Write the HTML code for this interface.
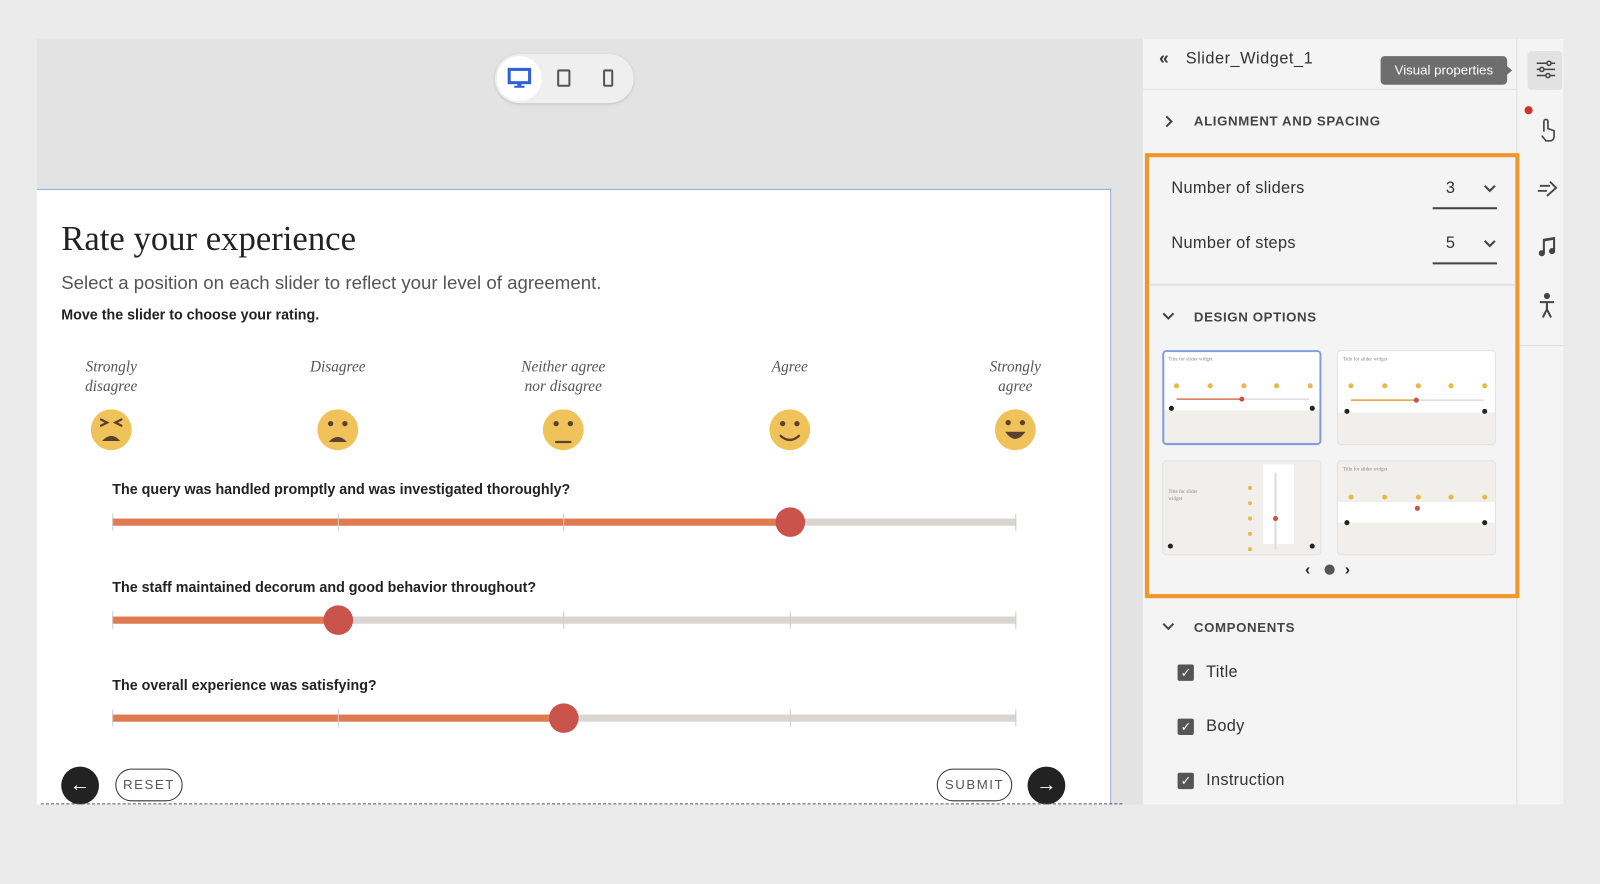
<!DOCTYPE html>
<html><head><meta charset="utf-8"><style>
*{margin:0;padding:0;box-sizing:border-box}
html,body{width:1600px;height:884px;overflow:hidden;background:#ebebeb}
#w{position:absolute;left:0;top:0;width:1568px;height:866px;transform:scale(1.02041,1.02079);transform-origin:0 0;font-family:"Liberation Sans",sans-serif}
.a{position:absolute}
.serif{font-family:"Liberation Serif",serif}
.lab{position:absolute;width:140px;text-align:center;font-family:"Liberation Serif",serif;font-style:italic;font-size:15px;color:#555;line-height:19px}
.q{position:absolute;left:110px;font-size:14px;font-weight:bold;color:#222}
.trk{position:absolute;left:110px;width:886px;height:7px;background:#d9d6d2}
.fill{position:absolute;left:0;top:0;height:7px;background:#e07a50}
.tk{position:absolute;top:-5px;width:1px;height:17px;background:#ccc}
.kn{position:absolute;top:-11px;width:29px;height:29px;border-radius:50%;background:#c9524a}
.pt{color:#333;font-size:16px;position:absolute;letter-spacing:.3px}
.hd{position:absolute;font-size:13px;font-weight:bold;letter-spacing:.6px;color:#444}
.cb{position:absolute;left:1154px;width:16px;height:16px;background:#555;border-radius:2px;color:#fff;font-size:12px;text-align:center;line-height:16px}
.th{position:absolute;width:156px;height:93px;background:#f0efeb;border-radius:4px;border:1px solid #e2e2e2;overflow:hidden}
</style></head><body><div id="w">
<div class="a" style="left:36px;top:38px;width:1084px;height:750px;background:#e3e3e3"></div>
<div class="a" style="left:485px;top:53px;width:136px;height:48px;border-radius:24px;background:#efefef;box-shadow:0 1px 3px rgba(0,0,0,.15)"></div>
<div class="a" style="left:487px;top:55px;width:44px;height:44px;border-radius:22px;background:#fff"></div>
<svg class="a" style="left:497px;top:66px" width="24" height="22"><rect x="2" y="2" width="20" height="13" fill="none" stroke="#2f62d6" stroke-width="3"/><rect x="10" y="15" width="4" height="4" fill="#2f62d6"/><rect x="7" y="18" width="10" height="2" fill="#2f62d6"/></svg>
<svg class="a" style="left:545px;top:67px" width="16" height="20"><rect x="2" y="2" width="11" height="15" rx="1" fill="none" stroke="#555" stroke-width="2"/></svg>
<svg class="a" style="left:590px;top:67px" width="14" height="20"><rect x="2" y="2" width="8" height="15" rx="1" fill="none" stroke="#555" stroke-width="2"/></svg>
<div class="a" style="left:36px;top:185px;width:1053px;height:603px;background:#fff;border-top:1px solid #8fa8d8;border-right:1px solid #8fa8d8"></div>
<div class="a serif" style="left:60px;top:216px;font-size:34px;color:#222">Rate your experience</div>
<div class="a" style="left:60px;top:266px;font-size:18.3px;color:#555">Select a position on each slider to reflect your level of agreement.</div>
<div class="a" style="left:60px;top:300px;font-size:14px;font-weight:bold;color:#222">Move the slider to choose your rating.</div>
<div class="lab" style="left:39px;top:351px">Strongly<br>disagree</div>
<div class="lab" style="left:261px;top:351px">Disagree</div>
<div class="lab" style="left:482px;top:351px">Neither agree<br>nor disagree</div>
<div class="lab" style="left:704px;top:351px">Agree</div>
<div class="lab" style="left:925px;top:351px">Strongly<br>agree</div>
<svg class="a" style="left:0;top:0" width="1100" height="460">
<g fill="#f0c25a"><circle cx="109" cy="421" r="20"/><circle cx="331" cy="421" r="20"/><circle cx="552" cy="421" r="20"/><circle cx="774" cy="421" r="20"/><circle cx="995" cy="421" r="20"/></g>
<g stroke="#5a4030" stroke-width="2.2" fill="none" stroke-linecap="round"><path d="M99 411l6 3-6 3M119 411l-6 3 6 3"/><path d="M545 433h14"/><path d="M765 427q9 8 18 0"/></g>
<g fill="#5a4030"><circle cx="324" cy="415" r="2.6"/><circle cx="338" cy="415" r="2.6"/><circle cx="545" cy="415" r="2.6"/><circle cx="559" cy="415" r="2.6"/><circle cx="767" cy="415" r="2.6"/><circle cx="781" cy="415" r="2.6"/><circle cx="988" cy="414" r="2.6"/><circle cx="1002" cy="414" r="2.6"/>
<path d="M100 432q9-10 18 0z"/><path d="M322 433q9-10 18 0z"/><path d="M985 423h20q-10 14-20 0z"/></g>
</svg>
<div class="q" style="top:471px">The query was handled promptly and was investigated thoroughly?</div>
<div class="trk" style="top:508px"><div class="fill" style="width:664px"></div><div class="tk" style="left:0"></div><div class="tk" style="left:221px"></div><div class="tk" style="left:442px"></div><div class="tk" style="left:664px"></div><div class="tk" style="left:885px"></div><div class="kn" style="left:650px"></div></div>
<div class="q" style="top:567px">The staff maintained decorum and good behavior throughout?</div>
<div class="trk" style="top:604px"><div class="fill" style="width:221px"></div><div class="tk" style="left:0"></div><div class="tk" style="left:221px"></div><div class="tk" style="left:442px"></div><div class="tk" style="left:664px"></div><div class="tk" style="left:885px"></div><div class="kn" style="left:207px"></div></div>
<div class="q" style="top:663px">The overall experience was satisfying?</div>
<div class="trk" style="top:700px"><div class="fill" style="width:442px"></div><div class="tk" style="left:0"></div><div class="tk" style="left:221px"></div><div class="tk" style="left:442px"></div><div class="tk" style="left:664px"></div><div class="tk" style="left:885px"></div><div class="kn" style="left:428px"></div></div>
<div class="a" style="left:60px;top:751px;width:37px;height:37px;border-radius:50%;background:#222;color:#fff;text-align:center;line-height:36px;font-size:20px">←</div>
<div class="a" style="left:113px;top:753px;width:66px;height:32px;border:1.5px solid #333;border-radius:16px;text-align:center;line-height:29px;font-size:13px;letter-spacing:1.5px;color:#555">RESET</div>
<div class="a" style="left:918px;top:753px;width:74px;height:32px;border:1.5px solid #333;border-radius:16px;text-align:center;line-height:29px;font-size:13px;letter-spacing:1.5px;color:#555">SUBMIT</div>
<div class="a" style="left:1007px;top:751px;width:37px;height:37px;border-radius:50%;background:#222;color:#fff;text-align:center;line-height:36px;font-size:20px">→</div>
<div class="a" style="left:40px;top:787px;width:1060px;border-top:1.5px dashed #555"></div>
<div class="a" style="left:1120px;top:38px;width:366px;height:750px;background:#f4f4f4"></div>
<div class="a" style="left:1486px;top:38px;width:46px;height:750px;background:#f4f4f4;border-left:1px solid #e0e0e0"></div>
<div class="a" style="left:1120px;top:87px;width:366px;height:1px;background:#e2e2e2"></div>
<div class="a" style="left:1136px;top:47px;font-size:17px;font-weight:bold;color:#333">«</div>
<div class="a" style="left:1162px;top:49px;font-size:16px;color:#333;letter-spacing:.5px">Slider_Widget_1</div>
<div class="a" style="left:1353px;top:55px;width:124px;height:28px;background:#6e6e6e;border-radius:4px;color:#fff;font-size:13px;line-height:28px;text-align:center">Visual properties</div>
<div class="a" style="left:1476px;top:64px;width:0;height:0;border-top:5px solid transparent;border-bottom:5px solid transparent;border-left:6px solid #6e6e6e"></div>
<div class="a" style="left:1497px;top:50px;width:34px;height:38px;background:#e2e2e2;border-radius:4px"></div>
<svg class="a" style="left:1504px;top:58px" width="22" height="22" stroke="#444" stroke-width="1.5" fill="none"><path d="M2 4h18M2 10h18M2 16h18"/><circle cx="14" cy="4" r="2" fill="#e2e2e2"/><circle cx="7" cy="10" r="2" fill="#e2e2e2"/><circle cx="13" cy="16" r="2" fill="#e2e2e2"/></svg>
<div class="a" style="left:1494px;top:104px;width:8px;height:8px;border-radius:50%;background:#d0312d"></div>
<svg class="a" style="left:1506px;top:115px" width="22" height="24" stroke="#444" stroke-width="1.6" fill="none"><path d="M7 14V4a2 2 0 014 0v7l6 2v6a4 4 0 01-4 4H9l-4-5"/></svg>
<svg class="a" style="left:1505px;top:174px" width="24" height="20" stroke="#444" stroke-width="1.8" fill="none"><path d="M4 8h10M2 13h9M14 4l6 6-9 8"/></svg>
<svg class="a" style="left:1506px;top:231px" width="20" height="22" fill="#444"><path d="M6 3l12-2v14h-2V4L8 5.5V17H6z"/><circle cx="5" cy="17" r="3"/><circle cx="15" cy="15" r="3"/></svg>
<svg class="a" style="left:1506px;top:287px" width="20" height="26" stroke="#444" stroke-width="2" fill="none"><circle cx="10" cy="3" r="2" fill="#444"/><path d="M3 9h14M10 9v7M10 16l-4 8M10 16l4 8"/></svg>
<div class="a" style="left:1488px;top:338px;width:44px;height:1px;background:#e0e0e0"></div>
<svg class="a" style="left:1140px;top:112px" width="12" height="14" stroke="#444" stroke-width="2" fill="none"><path d="M3 2l5 5-5 5"/></svg>
<div class="hd" style="left:1170px;top:111px">ALIGNMENT AND SPACING</div>
<div class="a" style="left:1122px;top:150px;width:367px;height:436px;border:4px solid #f0962a"></div>
<div class="pt" style="left:1148px;top:176px">Number of sliders</div>
<div class="pt" style="left:1417px;top:176px">3</div>
<div class="pt" style="left:1417px;top:230px">5</div>
<svg class="a" style="left:1453px;top:178px" width="14" height="70" stroke="#444" stroke-width="2" fill="none"><path d="M2 4l5 5 5-5M2 58l5 5 5-5"/></svg>
<div class="a" style="left:1404px;top:203px;width:63px;height:1.5px;background:#444"></div>
<div class="pt" style="left:1148px;top:230px">Number of steps</div>
<div class="a" style="left:1404px;top:257px;width:63px;height:1.5px;background:#444"></div>
<div class="a" style="left:1126px;top:278px;width:359px;height:2px;background:#e2e2e2"></div>
<svg class="a" style="left:1138px;top:304px" width="14" height="12" stroke="#444" stroke-width="2" fill="none"><path d="M2 3l5 5 5-5"/></svg>
<div class="hd" style="left:1170px;top:303px">DESIGN OPTIONS</div>
<div class="th" style="left:1139px;top:343px;border:2px solid #7f9ee0"><div style="height:57px;background:#fff"></div></div>
<div class="th" style="left:1310px;top:343px"><div style="height:60px;background:#fff"></div></div>
<div class="th" style="left:1139px;top:451px"><div style="position:absolute;left:98px;top:3px;width:30px;height:78px;background:#fff"></div></div>
<div class="th" style="left:1310px;top:451px"><div style="position:absolute;top:40px;width:156px;height:20px;background:#fff"></div></div>
<svg class="a" style="left:1139px;top:343px" width="330" height="205">
<g fill="#e8b94a"><circle cx="14" cy="35" r="2.5"/><circle cx="47" cy="35" r="2.5"/><circle cx="80" cy="35" r="2.5"/><circle cx="112" cy="35" r="2.5"/><circle cx="145" cy="35" r="2.5"/><circle cx="185" cy="35" r="2.5"/><circle cx="218" cy="35" r="2.5"/><circle cx="251" cy="35" r="2.5"/><circle cx="283" cy="35" r="2.5"/><circle cx="316" cy="35" r="2.5"/><circle cx="185" cy="144" r="2.5"/><circle cx="218" cy="144" r="2.5"/><circle cx="251" cy="144" r="2.5"/><circle cx="283" cy="144" r="2.5"/><circle cx="316" cy="144" r="2.5"/><circle cx="86" cy="135" r="2"/><circle cx="86" cy="150" r="2"/><circle cx="86" cy="165" r="2"/><circle cx="86" cy="180" r="2"/><circle cx="86" cy="195" r="2"/></g>
<path d="M14 48h64" stroke="#d9734f" stroke-width="1.5"/><path d="M78 48h66" stroke="#ccc" stroke-width="1"/><circle cx="78" cy="48" r="2.5" fill="#c9524a"/>
<path d="M185 49h64" stroke="#e0a040" stroke-width="1.5"/><path d="M249 49h66" stroke="#ccc"/><circle cx="249" cy="49" r="2.5" fill="#c9524a"/>
<path d="M111 120v75" stroke="#ddd" stroke-width="2"/><circle cx="111" cy="165" r="2.5" fill="#c9524a"/>
<circle cx="250" cy="155" r="2.5" fill="#c9524a"/>
<g fill="#222"><circle cx="9" cy="57" r="2.5"/><circle cx="147" cy="57" r="2.5"/><circle cx="181" cy="60" r="2.5"/><circle cx="316" cy="60" r="2.5"/><circle cx="8" cy="192" r="2.5"/><circle cx="147" cy="192" r="2.5"/><circle cx="181" cy="169" r="2.5"/><circle cx="316" cy="169" r="2.5"/></g>
<g fill="#888" font-size="5" font-family="Liberation Serif"><text x="6" y="10">Title for slider widget</text><text x="177" y="10">Title for slider widget</text><text x="177" y="118">Title for slider widget</text><text x="6" y="140">Title for slider</text><text x="6" y="147">widget</text></g>
</svg>
<div class="a" style="left:1279px;top:550px;font-size:15px;font-weight:bold;color:#222">‹</div>
<div class="a" style="left:1298px;top:553px;width:10px;height:10px;border-radius:50%;background:#555"></div>
<div class="a" style="left:1318px;top:550px;font-size:15px;font-weight:bold;color:#222">›</div>
<svg class="a" style="left:1138px;top:608px" width="14" height="12" stroke="#444" stroke-width="2" fill="none"><path d="M2 3l5 5 5-5"/></svg>
<div class="hd" style="left:1170px;top:607px">COMPONENTS</div>
<div class="cb" style="top:651px">✓</div><div class="pt" style="left:1182px;top:650px">Title</div>
<div class="cb" style="top:704px">✓</div><div class="pt" style="left:1182px;top:703px">Body</div>
<div class="cb" style="top:757px">✓</div><div class="pt" style="left:1182px;top:756px">Instruction</div>
</div></body></html>
